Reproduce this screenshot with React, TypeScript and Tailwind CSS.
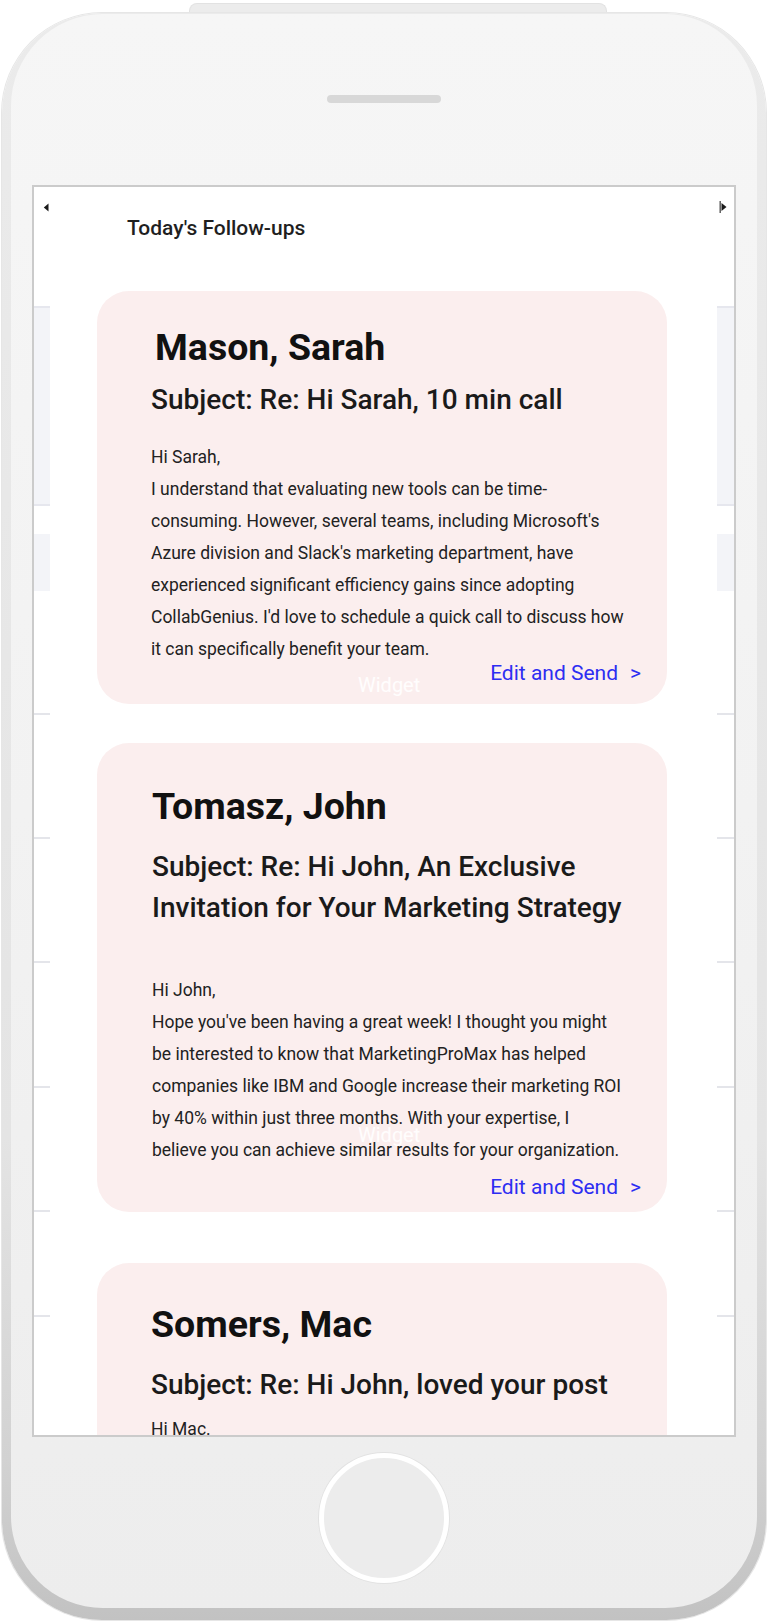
import React from "react";

const SIDE_LINES = [122, 122, 122, 123, 122, 103];

function LeftArrow() {
  return (
    <svg width="6" height="9" viewBox="0 0 6 9" className="block">
      <path d="M5.5 0.5 L0.8 4.5 L5.5 8.5 Z" fill="#1a1a1a" />
    </svg>
  );
}

function RightArrow() {
  return (
    <svg width="8" height="12" viewBox="0 0 8 12" className="block">
      <rect x="0.5" y="0" width="1.4" height="12" fill="#555" />
      <path d="M2.5 2 L7.5 6 L2.5 10 Z" fill="#1a1a1a" />
    </svg>
  );
}

function SideStrip({ side }: { side: "left" | "right" }) {
  return (
    <div className={side === "left" ? "flex w-[16px] flex-col" : "flex w-[17px] flex-col"}>
      <div className={side === "left" ? "mt-[16px] flex h-[9px] justify-start pl-[9px]" : "mt-[14px] flex h-[12px] justify-start pl-[2px]"}>
        {side === "left" ? <LeftArrow /> : <RightArrow />}
      </div>
      <div className={side === "left" ? "mt-[94px] h-[200px] border-y-2 border-[#e6e7ee] bg-[#f3f4f8]" : "mt-[93px] h-[200px] border-y-2 border-[#e6e7ee] bg-[#f3f4f8]"} />
      <div className="mt-[28px] h-[57px] bg-[#f3f4f8]" />
      {SIDE_LINES.map((m, i) => (
        <div key={i} className="h-[2px] shrink-0 bg-[#e4e5ea]" style={{ marginTop: m }} />
      ))}
    </div>
  );
}

function EditSend({ className }: { className: string }) {
  return (
    <div className={className}>
      <span className="text-[21px] leading-[24px] text-[#2d2df2]">Edit and Send</span>
      <span className="text-[21px] leading-[24px] text-[#2d2df2]">&gt;</span>
    </div>
  );
}

function Body({ lines }: { lines: string[] }) {
  return (
    <div className="relative text-[17.5px] leading-[32px] text-[#222]">
      {lines.map((l, i) => (
        <p key={i} className="whitespace-nowrap">
          {l}
        </p>
      ))}
    </div>
  );
}

export default function App() {
  return (
    <div className="h-[1624px] w-[768px] overflow-hidden bg-white font-['Roboto',sans-serif]">
      {/* top side button */}
      <div className="ml-[189px] mt-[3px] h-[10px] w-[418px] rounded-t-[8px] border border-b-0 border-[#e2e2e2] bg-[#ececec]" />
      {/* phone body */}
      <div className="ml-[2px] h-[1607px] w-[764px] rounded-[100px] bg-[linear-gradient(to_bottom,#ebebeb,#e4e4e4_70%,#d2d2d2_90%,#c2c2c2)] px-[9px] pb-[12px] pt-[1px] shadow-[0_0_0_1px_#e6e6e6]">
        <div className="flex h-full flex-col items-center rounded-[92px] bg-[linear-gradient(to_bottom,#f6f6f6,#f2f2f2_50%,#ededed)]">
          {/* speaker */}
          <div className="mt-[81px] h-[8px] w-[114px] rounded-full bg-[#d8d8d8]" />
          {/* screen */}
          <div className="mt-[82px] flex h-[1252px] w-[704px] overflow-hidden border-2 border-[#cbcbcb] bg-white">
            <SideStrip side="left" />
            <div className="flex w-[667px] flex-col bg-white">
              <h1 className="ml-[77px] mt-[29px] text-[21px] font-medium leading-[24px] text-[#1f1f1f]">
                Today's Follow-ups
              </h1>

              {/* Card 1 */}
              <div className="relative ml-[47px] mt-[51px] flex w-[570px] shrink-0 flex-col rounded-[32px] bg-[#fbeeee] pb-[19px] pl-[54px] pr-[26px] pt-[34px]">
                <span className="absolute left-[261px] top-[382px] text-[20px] leading-[24px] text-white/90">Widget</span>
                <h2 className="relative ml-[4px] text-[37.5px] font-bold leading-[44px] text-[#111]">Mason, Sarah</h2>
                <h3 className="relative mt-[13px] text-[28px] font-medium leading-[36px] text-[#1a1a1a]">
                  Subject: Re: Hi Sarah, 10 min call
                </h3>
                <div className="mt-[23px]">
                  <Body
                    lines={[
                      "Hi Sarah,",
                      "I understand that evaluating new tools can be time-",
                      "consuming. However, several teams, including Microsoft's",
                      "Azure division and Slack's marketing department, have",
                      "experienced significant efficiency gains since adopting",
                      "CollabGenius. I'd love to schedule a quick call to discuss how",
                      "it can specifically benefit your team.",
                    ]}
                  />
                </div>
                <EditSend className="relative -mt-[4px] flex justify-end gap-[12px]" />
              </div>

              {/* Card 2 */}
              <div className="relative ml-[47px] mt-[39px] flex w-[570px] shrink-0 flex-col rounded-[32px] bg-[#fbeeee] pb-[13px] pl-[55px] pr-[26px] pt-[41px]">
                <span className="absolute left-[261px] top-[380px] text-[20px] leading-[24px] text-white/90">Widget</span>
                <h2 className="relative text-[37.5px] font-bold leading-[44px] text-[#111]">Tomasz, John</h2>
                <h3 className="relative mt-[18px] text-[28px] font-medium leading-[41px] text-[#1a1a1a]">
                  <span className="block whitespace-nowrap">Subject: Re: Hi John, An Exclusive</span>
                  <span className="block whitespace-nowrap">Invitation for Your Marketing Strategy</span>
                </h3>
                <div className="mt-[46px]">
                  <Body
                    lines={[
                      "Hi John,",
                      "Hope you've been having a great week! I thought you might",
                      "be interested to know that MarketingProMax has helped",
                      "companies like IBM and Google increase their marketing ROI",
                      "by 40% within just three months. With your expertise, I",
                      "believe you can achieve similar results for your organization.",
                    ]}
                  />
                </div>
                <EditSend className="relative mt-[9px] flex justify-end gap-[12px]" />
              </div>

              {/* Card 3 */}
              <div className="relative ml-[47px] mt-[51px] flex w-[570px] shrink-0 flex-col rounded-[32px] bg-[#fbeeee] pb-[20px] pl-[54px] pr-[26px] pt-[39px]">
                <h2 className="text-[37.5px] font-bold leading-[44px] text-[#111]">Somers, Mac</h2>
                <h3 className="mt-[21px] text-[28px] font-medium leading-[36px] text-[#1a1a1a]">
                  Subject: Re: Hi John, loved your post
                </h3>
                <div className="mt-[10px]">
                  <Body
                    lines={[
                      "Hi Mac.",
                      "Your recent post on building remote-first teams really",
                      "resonated with me. I'd love to share a few ideas on how",
                      "we could help your team collaborate even better.",
                    ]}
                  />
                </div>
                <EditSend className="relative mt-[9px] flex justify-end gap-[12px]" />
              </div>
            </div>
            <SideStrip side="right" />
          </div>
          {/* home button */}
          <div className="mt-[16px] h-[130px] w-[130px] rounded-full border-[5px] border-white bg-[#ececec] shadow-[0_0_0_1px_#e2e2e2]" />
        </div>
      </div>
    </div>
  );
}
